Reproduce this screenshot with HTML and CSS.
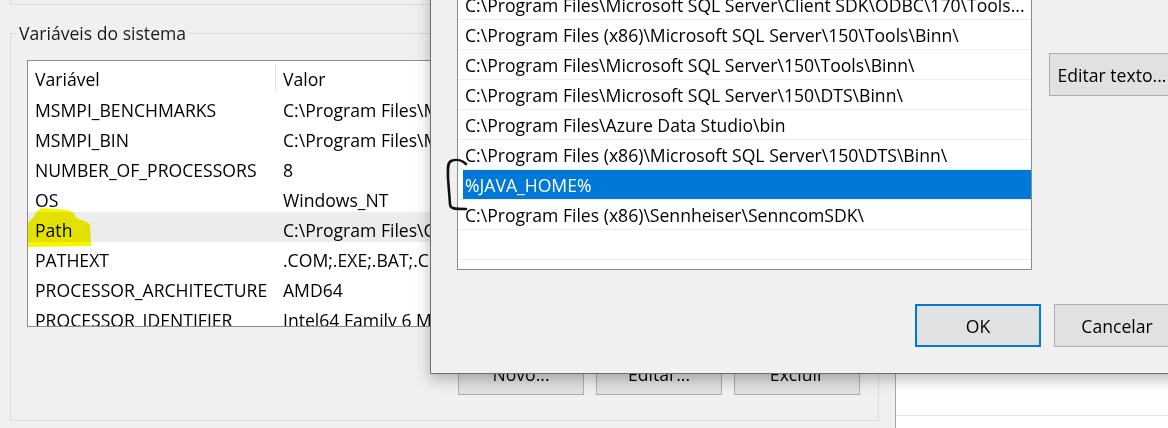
FILE: index.html
```html
<!DOCTYPE html>
<html lang="pt-BR">
<head>
  <meta charset="UTF-8">
  <meta name="viewport" content="width=device-width, initial-scale=1.0">
  <title>Variáveis de ambiente</title>
  <link rel="stylesheet" href="styles.css">
</head>
<body>
  <div class="desk">
    <div class="env_win">
      <div class="group_prev"></div>
      <fieldset class="group_sys">
        <legend>Variáveis do sistema</legend>
        <div class="var_list">
          <div class="var_head">
            <span class="col_name">Variável</span>
            <span class="col_val">Valor</span>
          </div>
          <div class="var_row"><span class="col_name">MSMPI_BENCHMARKS</span><span class="col_val">C:\Program Files\Microsoft MPI\Benchmarks\</span></div>
          <div class="var_row"><span class="col_name">MSMPI_BIN</span><span class="col_val">C:\Program Files\Microsoft MPI\Bin\</span></div>
          <div class="var_row"><span class="col_name">NUMBER_OF_PROCESSORS</span><span class="col_val">8</span></div>
          <div class="var_row"><span class="col_name">OS</span><span class="col_val">Windows_NT</span></div>
          <div class="var_row focus"><span class="col_name">Path</span><span class="col_val">C:\Program Files\Common Files\Oracle\Java\javapath</span></div>
          <div class="var_row"><span class="col_name">PATHEXT</span><span class="col_val">.COM;.EXE;.BAT;.CMD;.VBS;.VBE;.JS</span></div>
          <div class="var_row"><span class="col_name">PROCESSOR_ARCHITECTURE</span><span class="col_val">AMD64</span></div>
          <div class="var_row"><span class="col_name">PROCESSOR_IDENTIFIER</span><span class="col_val">Intel64 Family 6 Model 142</span></div>
        </div>
        <div class="var_btns">
          <button class="win_btn">Novo...</button>
          <button class="win_btn">Editar...</button>
          <button class="win_btn">Excluir</button>
        </div>
      </fieldset>
    </div>
    <div class="back_win"><div class="back_line"></div></div>

    <div class="edit_dlg">
      <div class="dlg_body">
        <div class="path_list">
          <div class="path_row">C:\Program Files\Microsoft SQL Server\Client SDK\ODBC\170\Tools...</div>
          <div class="path_row">C:\Program Files (x86)\Microsoft SQL Server\150\Tools\Binn\</div>
          <div class="path_row">C:\Program Files\Microsoft SQL Server\150\Tools\Binn\</div>
          <div class="path_row">C:\Program Files\Microsoft SQL Server\150\DTS\Binn\</div>
          <div class="path_row">C:\Program Files\Azure Data Studio\bin</div>
          <div class="path_row">C:\Program Files (x86)\Microsoft SQL Server\150\DTS\Binn\</div>
          <div class="path_row sel">%JAVA_HOME%</div>
          <div class="path_row">C:\Program Files (x86)\Sennheiser\SenncomSDK\</div>
          <div class="path_row"></div>
          <div class="path_row"></div>
        </div>
        <div class="side_btns">
          <button class="win_btn tall">Editar texto...</button>
        </div>
      </div>
      <div class="dlg_foot">
        <button class="win_btn tall default">OK</button>
        <button class="win_btn tall">Cancelar</button>
      </div>
    </div>

    <!-- marca-texto amarelo em cima de "Path" -->
    <svg class="marker" width="70" height="46" viewBox="0 0 70 46">
      <path d="M15 2 L41 4 L47 7 L49 12 L57 15 L63 18 L64 40 L1 41 L1 17 L6 12 L10 5 Z" fill="#f6f400"/>
    </svg>
    <!-- colchete desenhado a mão -->
    <svg class="bracket" width="30" height="60" viewBox="0 0 30 60">
      <path d="M21 9 C17 5 11 4 6 6 C2 8 3 15 3 23 L5 49 C5 54 10 54 21 54" fill="none" stroke="#111" stroke-width="2.6" stroke-linecap="round"/>
    </svg>
  </div>
</body>
</html>
```

FILE: styles.css
```css
* {
  box-sizing: border-box;
}
body {
  margin: 0;
  background-color: #f0f0f0;
  font-family: "Open Sans", "Noto Sans", sans-serif;
  font-size: 17.6px;
  color: #000;
}
.desk {
  position: relative;
  width: 1168px;
  height: 428px;
  overflow: hidden;
  display: flex;
}

/* janela de trás */
.env_win {
  width: 896px;
  height: 428px;
  border-right: 1px solid #a8a8a8;
  background-color: #f0f0f0;
}
.group_prev {
  margin-left: 10px;
  width: 868px;
  height: 5px;
  border-left: 1px solid #dcdcdc;
  border-bottom: 1px solid #dcdcdc;
}
.group_sys {
  margin: 16px 0 0 10px;
  width: 868px;
  border: 1px solid #dcdcdc;
  padding: 15px 18px 25px 6px;
}
.group_sys legend {
  padding: 0 2px;
  line-height: 24px;
  color: #1a1a1a;
}
.var_list {
  margin-left: 10px;
  width: 833px;
  height: 267px;
  border: 1px solid #8c8c8c;
  background-color: #fff;
  overflow: hidden;
}
.var_head {
  display: flex;
  height: 31px;
  line-height: 30px;
  padding-top: 3px;
}
.var_head .col_name {
  border-right: 1px solid #e5e5e5;
}
.var_row {
  display: flex;
  height: 30px;
  line-height: 30px;
  padding-top: 3px;
}
.var_row.focus {
  background-color: #ececec;
}
.col_name {
  width: 248px;
  padding-left: 7px;
  white-space: nowrap;
}
.col_val {
  padding-left: 7px;
  white-space: nowrap;
}
.var_btns {
  display: flex;
  gap: 12px;
  justify-content: flex-end;
  margin-top: 35px;
}
.var_btns .win_btn {
  height: 33px;
  padding-bottom: 11px;
}

.win_btn {
  width: 126px;
  height: 33px;
  background-color: #e1e1e1;
  border: 1px solid #adadad;
  font-family: inherit;
  font-size: 17.6px;
  line-height: 22px;
  color: #000;
  padding: 0;
}
.win_btn.tall {
  height: 43px;
}
.win_btn.default {
  border: 2px solid #0078d7;
}

/* janela branca mais atrás, à direita */
.back_win {
  flex: 1;
  background-color: #fff;
}
.back_line {
  margin-top: 415px;
  border-top: 1px solid #e4e4e4;
}

/* diálogo Editar variável de ambiente */
.edit_dlg {
  position: absolute;
  left: 430px;
  top: -40px;
  width: 780px;
  height: 414px;
  background-color: #f0f0f0;
  border: 1px solid #6e6e6e;
  box-shadow: 0 5px 14px rgba(0, 0, 0, .28);
  padding: 28px 29px 0 26px;
}
.dlg_body {
  display: flex;
}
.path_list {
  width: 575px;
  height: 281px;
  border: 1px solid #8c8c8c;
  background-color: #fff;
  overflow: hidden;
}
.path_row {
  height: 30px;
  line-height: 29px;
  padding-left: 7px;
  padding-top: 1px;
  border-bottom: 1px solid #eeeeee;
  white-space: nowrap;
}
.path_row.sel {
  background: linear-gradient(90deg, #fff 5px, #0078d7 5px);
  color: #fff;
}
.side_btns {
  margin-left: 17px;
  padding-top: 64px;
}
.dlg_foot {
  display: flex;
  justify-content: flex-end;
  gap: 13px;
  margin-top: 34px;
}

.marker {
  position: absolute;
  left: 27px;
  top: 206px;
  mix-blend-mode: multiply;
}
.bracket {
  position: absolute;
  left: 445px;
  top: 155px;
}
```
